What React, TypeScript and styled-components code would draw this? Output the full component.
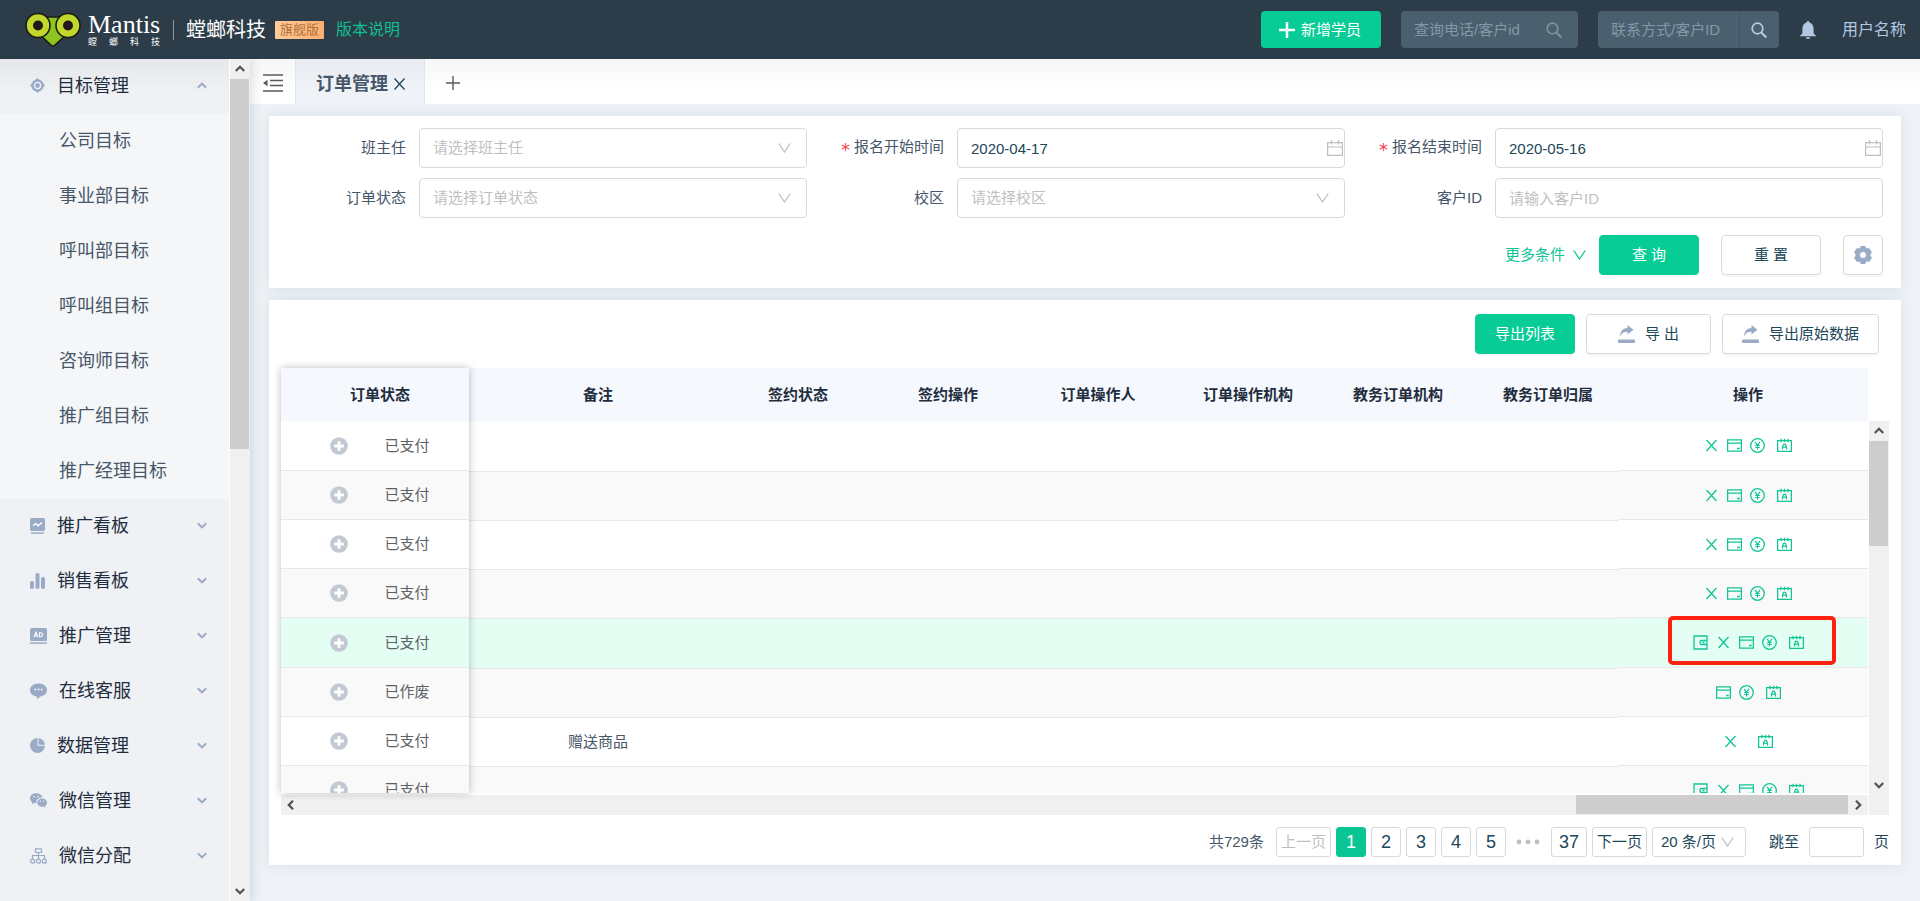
import React from "react";
import styled, { createGlobalStyle, css } from "styled-components";

const color = {
  header: "#2c3d49",
  headerField: "#4a606e",
  green: "#07cc96",
  greenInk: "#11c596",
  page: "#eff3f7",
  line: "#d9d9d9",
  rowLine: "#e8e8e8",
  ink: "#1f2d3d",
  teal: "#20465a",
  label: "#475669",
  hint: "#bfbfbf",
  icon: "#9aabc6",
};

const GlobalStyle = createGlobalStyle`
  * { box-sizing: border-box; }
  body {
    margin: 0;
    background: ${color.page};
    color: ${color.teal};
    font-family: "Liberation Sans", "Noto Sans CJK SC", sans-serif;
    font-size: 15px;
    line-height: 22px;
  }
  button, input, select { font: inherit; color: inherit; margin: 0; outline: none; }
  button { cursor: pointer; }
  a { text-decoration: none; color: inherit; }
  svg { display: block; flex: none; }
  ul { list-style: none; margin: 0; padding: 0; }
`;

/* ---------- page frame ---------- */

const Page = styled.div`
  display: flex;
  flex-direction: column;
  min-height: 100vh;
`;

const Body = styled.div`
  display: flex;
  flex: 1;
`;

const Main = styled.main`
  flex: 1;
  min-width: 0;
`;

/* ---------- top bar ---------- */

const TopBar = styled.header`
  display: flex;
  align-items: center;
  height: 59px;
  padding: 0 14px 0 25px;
  background: ${color.header};
`;

const Brand = styled.a`
  display: flex;
  align-items: center;
  gap: 7px;
  color: #fff;
`;

const BrandText = styled.span`
  display: flex;
  flex-direction: column;
  width: 72px;
`;

const BrandName = styled.span`
  font-family: "Liberation Serif", serif;
  font-size: 26px;
  line-height: 24px;
`;

const BrandSub = styled.span`
  display: flex;
  justify-content: space-between;
  font-size: 9px;
  line-height: 10px;
`;

const Company = styled.h1`
  margin: 0 9px 0 13px;
  padding-left: 12px;
  border-left: 1px solid #8d979e;
  color: #fff;
  font-size: 20px;
  font-weight: 400;
  line-height: 20px;
`;

const Edition = styled.span`
  margin-right: 12px;
  padding: 0 5px;
  border-radius: 1px;
  background: linear-gradient(90deg, #ffca9a, #fdb070);
  color: #b0703a;
  font-size: 13px;
  line-height: 18px;
  white-space: nowrap;
`;

const VersionLink = styled.a`
  color: #10be90;
  font-size: 16px;
`;

const TopTools = styled.div`
  display: flex;
  align-items: center;
  margin-left: auto;
  height: 37px;
`;

const AddButton = styled.button`
  display: flex;
  align-items: center;
  gap: 6px;
  width: 120px;
  height: 37px;
  padding: 0 18px;
  border: 0;
  border-radius: 4px;
  background: ${color.green};
  color: #fff;
  white-space: nowrap;
`;

const SearchBox = styled.label<{ $split?: boolean }>`
  display: flex;
  align-items: center;
  width: ${(p) => (p.$split ? 181 : 177)}px;
  height: 37px;
  margin-left: 20px;
  border-radius: 4px;
  background: ${color.headerField};
`;

const SearchInput = styled.input`
  flex: 1;
  min-width: 0;
  height: 37px;
  padding: 0 0 0 13px;
  border: 0;
  background: transparent;
  color: #fff;
  &::placeholder { color: #8498a9; opacity: 1; }
`;

const SearchAction = styled.button<{ $split?: boolean }>`
  display: flex;
  align-items: center;
  justify-content: center;
  width: ${(p) => (p.$split ? 40 : 48)}px;
  height: 37px;
  padding: 0;
  border: 0;
  border-left: ${(p) => (p.$split ? "1px solid #405562" : "0")};
  background: transparent;
  color: ${(p) => (p.$split ? "#b9cbe2" : "#7f929f")};
`;

const BellButton = styled.button`
  margin: 0 26px 0 21px;
  padding: 0;
  border: 0;
  background: transparent;
  color: #b3c6e2;
`;

const UserName = styled.a`
  color: #b3c6e2;
  font-size: 16px;
`;

/* ---------- side menu ---------- */

const Side = styled.aside`
  position: relative;
  display: flex;
  flex: none;
  width: 250px;
  background: #eff1f5;
  box-shadow: 2px 0 10px rgba(30, 50, 80, 0.16);
`;

const Menu = styled.nav`
  flex: 1;
  border-right: 1px solid #fff;
`;

const MenuGroup = styled.button<{ $open?: boolean }>`
  display: flex;
  align-items: center;
  gap: 12px;
  width: 100%;
  height: 55px;
  padding: 0 22px 2px 30px;
  border: 0;
  background: ${(p) => (p.$open ? "linear-gradient(#e6e7eb, #eff1f5 60%)" : "transparent")};
  color: ${color.ink};
  font-size: 18px;
  text-align: left;
  svg:last-child { margin-left: auto; }
`;

const SubMenu = styled.ul`
  background: #f5f6f8;
`;

const SubLink = styled.a`
  display: block;
  padding-left: 59px;
  color: ${color.label};
  font-size: 18px;
  line-height: 55px;
`;

/* ---------- scroll bars ---------- */

const VBar = styled.div`
  display: flex;
  flex-direction: column;
  flex: none;
  width: 20px;
  background: #f0f0f0;
  color: #505050;
`;

const HBar = styled.div`
  display: flex;
  height: 20px;
  margin-top: 2px;
  background: #f0f0f0;
  color: #505050;
`;

const BarEnd = styled.span`
  display: flex;
  align-items: center;
  justify-content: center;
  width: 20px;
  height: 20px;
`;

const Thumb = styled.div<{ $w: number; $h: number }>`
  width: ${(p) => p.$w}px;
  height: ${(p) => p.$h}px;
  background: #cdcdcd;
`;

const Spring = styled.div`
  flex: 1;
`;

/* ---------- tabs ---------- */

const Tabs = styled.div`
  display: flex;
  height: 45px;
  background: linear-gradient(#f6f6f6, #fff 70%);
`;

const TabTool = styled.button<{ $w: number }>`
  display: flex;
  align-items: center;
  justify-content: center;
  width: ${(p) => p.$w}px;
  padding: 2px 0 0;
  border: 0;
  background: transparent;
  color: #595959;
`;

const Tab = styled.div`
  display: flex;
  align-items: center;
  gap: 6px;
  width: 130px;
  padding-left: 20px;
  padding-top: 4px;
  border: solid #e1e5ea;
  border-width: 0 1px;
  background: linear-gradient(#e8ecf0, ${color.page} 70%);
  color: ${color.label};
  font-size: 18px;
  font-weight: 700;
  white-space: nowrap;
`;

const TabClose = styled.button`
  padding: 0;
  border: 0;
  background: transparent;
  color: ${color.teal};
`;

/* ---------- panels ---------- */

const Panels = styled.div`
  display: flex;
  flex-direction: column;
  gap: 12px;
  padding: 12px 19px 36px;
`;

const Panel = styled.section`
  background: #fff;
  box-shadow: 0 0 14px rgba(50, 80, 130, 0.12);
`;

const FilterPanel = styled(Panel)`
  padding: 12px 18px 13px 0;
`;

const Fields = styled.div`
  display: grid;
  grid-template-columns: repeat(3, 1fr);
  row-gap: 10px;
`;

const Field = styled.div`
  display: flex;
  align-items: center;
  height: 40px;
`;

const FieldLabel = styled.label`
  display: flex;
  justify-content: flex-end;
  flex: none;
  width: 150px;
  padding-right: 13px;
  color: ${color.label};
  white-space: nowrap;
`;

const Star = styled.span`
  padding: 3px 4px 0 0;
  color: #fa3e4b;
  font-family: "DejaVu Sans", sans-serif;
  font-size: 18px;
  line-height: 22px;
`;

const Control = styled.div`
  position: relative;
  flex: 1;
`;

const control = css`
  width: 100%;
  height: 40px;
  padding: 0 13px;
  border: 1px solid ${color.line};
  border-radius: 4px;
  background: #fff;
`;

const TextBox = styled.input`
  ${control}
  &::placeholder { color: ${color.hint}; opacity: 1; }
`;

const Select = styled.select`
  ${control}
  appearance: none;
  color: ${color.hint};
`;

const ControlIcon = styled.span<{ $right: number }>`
  position: absolute;
  top: 50%;
  right: ${(p) => p.$right}px;
  transform: translateY(-50%);
  color: ${color.hint};
  pointer-events: none;
`;

const Actions = styled.div`
  display: flex;
  justify-content: flex-end;
  gap: 22px;
  margin-top: 17px;
`;

const MoreLink = styled.a`
  display: flex;
  align-items: center;
  gap: 8px;
  margin-right: -9px;
  color: ${color.greenInk};
`;

const Button = styled.button<{ $primary?: boolean; $w: number }>`
  display: flex;
  align-items: center;
  justify-content: center;
  gap: 10px;
  width: ${(p) => p.$w}px;
  height: 40px;
  padding: 0;
  border: 1px solid ${(p) => (p.$primary ? color.green : color.line)};
  border-radius: 4px;
  background: ${(p) => (p.$primary ? color.green : "#fff")};
  color: ${(p) => (p.$primary ? "#fff" : color.teal)};
  box-shadow: 0 2px 0 rgba(0, 0, 0, 0.03);
  white-space: nowrap;
  svg { color: ${color.icon}; }
`;

const TablePanel = styled(Panel)`
  padding: 14px 12px 8px;
`;

const ExportRow = styled.div`
  display: flex;
  justify-content: flex-end;
  gap: 11px;
  padding-right: 10px;
  margin-bottom: 14px;
`;

const TableArea = styled.div`
  display: flex;
  gap: 1px;
`;

const TableColumn = styled.div`
  flex: 1;
  min-width: 0;
`;

const TableParts = styled.div`
  display: flex;
  height: 425px;
`;

const LeftPart = styled.div`
  position: relative;
  z-index: 1;
  flex: none;
  width: 188px;
  overflow: hidden;
  box-shadow: 0 0 8px rgba(0, 0, 0, 0.26);
`;

const MiddlePart = styled.div`
  flex: 1;
  min-width: 0;
  overflow: hidden;
`;

const RightPart = styled.div`
  flex: none;
  width: 250px;
  overflow: hidden;
`;

const Table = styled.table<{ $head: number; $shift?: number; $over?: number }>`
  width: calc(100% + ${(p) => p.$over || 0}px);
  border-collapse: separate;
  border-spacing: 0;
  table-layout: fixed;
  th, td { text-align: center; padding: 0; white-space: nowrap; }
  th {
    height: ${(p) => p.$head}px;
    background: #f5f8fd;
    color: ${color.ink};
    font-weight: 700;
  }
  th:first-child, td:first-child { padding-left: ${(p) => p.$shift || 0}px; }
  tbody tr:first-child td { height: 50px; }
`;

const Row = styled.tr<{ $state: "plain" | "striped" | "hovered" }>`
  td {
    position: relative;
    height: ${(p) => (p.$state === "hovered" ? 50 : 49)}px;
    border-bottom: 1px solid ${color.rowLine};
    background: ${(p) => ({ plain: "#fff", striped: "#f9f9f9", hovered: "#e4fef4" })[p.$state]};
    color: ${color.label};
  }
`;

const StatusCell = styled.div`
  display: flex;
  align-items: center;
  justify-content: center;
  gap: 36px;
  color: #5d6266;
`;

const PlainButton = styled.button`
  padding: 0;
  border: 0;
  background: transparent;
  color: inherit;
`;

const OpGroup = styled.div<{ $wide?: boolean }>`
  display: flex;
  align-items: center;
  justify-content: center;
  gap: ${(p) => (p.$wide ? 20 : 12)}px;
  color: ${color.greenInk};
`;

const OpIcons = styled.div`
  display: flex;
  align-items: center;
  gap: 8px;
`;

const Marker = styled.div`
  position: absolute;
  top: -2px;
  left: 50px;
  width: 168px;
  height: 49px;
  border: 4px solid #ff2012;
  border-radius: 5px;
  pointer-events: none;
`;

const SideBarCell = styled(VBar)`
  margin-top: 53px;
`;

/* ---------- pagination ---------- */

const Pager = styled.nav`
  display: flex;
  align-items: center;
  justify-content: flex-end;
  gap: 5px;
  margin-top: 12px;
  white-space: nowrap;
`;

const Total = styled.span`
  margin-right: 7px;
  color: ${color.label};
`;

const PageButton = styled.button<{ $w: number; $on?: boolean; $word?: boolean }>`
  width: ${(p) => p.$w}px;
  height: 30px;
  padding: 0;
  border: 1px solid ${(p) => (p.$on ? color.greenInk : color.line)};
  border-radius: 3px;
  background: ${(p) => (p.$on ? "#09c594" : "#fff")};
  color: ${(p) => (p.$on ? "#fff" : color.teal)};
  font-size: ${(p) => (p.$word ? 15 : 18)}px;
  line-height: 26px;
  &:disabled { color: ${color.hint}; }
`;

const Dots = styled.span`
  display: flex;
  justify-content: center;
  width: 35px;
  color: ${color.hint};
`;

const SizeBox = styled.div`
  position: relative;
  width: 94px;
  margin-right: 18px;
`;

const SizeSelect = styled.select`
  width: 100%;
  height: 30px;
  padding: 0 8px;
  border: 1px solid ${color.line};
  border-radius: 3px;
  background: #fff;
  appearance: none;
`;

const Jump = styled.label`
  display: flex;
  align-items: center;
  gap: 10px;
`;

const JumpInput = styled.input`
  width: 55px;
  height: 30px;
  border: 1px solid ${color.line};
  border-radius: 3px;
`;

/* ---------- drawings ---------- */

const Logo = () => (
  <svg width="56" height="35" viewBox="0 0 56 35">
    <path d="M14 5 L42 5 L42 22 L30 33 Q28 35 26 33 L14 22Z" fill="#8fc31f" stroke="#1c1a14" strokeWidth="1.6" />
    <circle cx="13" cy="13.5" r="12" fill="#c0d82c" stroke="#1c1a14" strokeWidth="1.6" />
    <circle cx="43" cy="13.5" r="12" fill="#c0d82c" stroke="#1c1a14" strokeWidth="1.6" />
    <circle cx="13" cy="13.5" r="5" fill="#231815" />
    <circle cx="43" cy="13.5" r="5" fill="#231815" />
  </svg>
);

const SearchIcon = () => (
  <svg width="16" height="16" viewBox="0 0 16 16" fill="none" stroke="currentColor" strokeWidth="1.7">
    <circle cx="6.5" cy="6.5" r="5.3" />
    <path d="M10.3 10.5 15.3 15.5" strokeWidth="2" />
  </svg>
);

const Bell = () => (
  <svg width="16" height="18" viewBox="0 0 16 18" fill="currentColor">
    <path d="M8 0a1.3 1.3 0 0 1 1.3 1.5C12 2.2 13.6 4.5 13.6 7.5V12.5L15.8 14.600V15.300H.2V14.600L2.400 12.500V7.500C2.400 4.500 4 2.200 6.700 1.500A1.300 1.300 0 0 1 8 0ZM5.700 16.200H10.300A2.300 1.800 0 0 1 5.700 16.200Z" />
  </svg>
);

const Plus = ({ size, weight }: { size: number; weight: number }) => (
  <svg width={size} height={size} viewBox="0 0 16 16" stroke="currentColor" strokeWidth={weight}>
    <path d="M8 0V16M0 8H16" />
  </svg>
);

const Chevron = ({ up }: { up?: boolean }) => (
  <svg width="10" height="7" viewBox="0 0 10 7" fill="none" stroke={color.icon} strokeWidth="2">
    <path d={up ? "M.8 5.700 5 1.600 9.200 5.700" : "M.8 1.300 5 5.400 9.200 1.300"} />
  </svg>
);

const Vee = () => (
  <svg width="13" height="10" viewBox="0 0 13 10" fill="none" stroke="currentColor" strokeWidth="1.3">
    <path d="M.8.5 6.500 9 12.200.5" />
  </svg>
);

const BarArrow = ({ turn }: { turn: number }) => (
  <svg width="10" height="10" viewBox="0 0 10 10" fill="none" stroke="currentColor" strokeWidth="2.200">
    <path d="M.8 7 5 2.800 9.200 7" transform={`rotate(${turn} 5 5)`} />
  </svg>
);

const Cross = () => (
  <svg width="11" height="12" viewBox="0 0 11 12" stroke="currentColor" strokeWidth="1.3">
    <path d="M.5.500 10.500 11.500M10.500.500.5 11.500" />
  </svg>
);

const Collapse = () => (
  <svg width="20" height="18" viewBox="0 0 20 18" stroke="currentColor" strokeWidth="1.600">
    <path d="M0 1H20M7 6.500H20M7 11.500H20M0 17H20" />
    <path d="M0 9 4.500 5.800V12.200Z" fill="currentColor" stroke="none" />
  </svg>
);

const CalendarIcon = () => (
  <svg width="16" height="16" viewBox="0 0 16 16" fill="none" stroke="currentColor" strokeWidth="1.200">
    <path d="M.6 2.600H15.400V15.400H.6ZM.6 7H15.400M4.500 0V4.500M11.500 0V4.500" />
  </svg>
);

const Gear = () => (
  <svg width="18" height="18" viewBox="0 0 18 18">
    <path
      fill="currentColor"
      fillRule="evenodd"
      d="M7 0H11L12.100 2.700 15 2.300 17.600 6 16 9 17.600 12 15 15.700 12.100 15.300 11 18H7L5.900 15.300 3 15.700.4 12 2 9 .4 6 3 2.300 5.900 2.700ZM9 5.800A3.200 3.200 0 1 0 9 12.200 3.200 3.200 0 1 0 9 5.800Z"
      stroke="currentColor"
      strokeWidth=".5"
      strokeLinejoin="round"
    />
  </svg>
);

const ExportIcon = () => (
  <svg width="17" height="18" viewBox="0 0 17 18" fill="currentColor">
    <path d="M9.500 0 15.500 4.800 9.500 9.600V6.700C6 6.700 3.800 8 2 11.400 2.200 6.500 4.500 3.200 9.500 2.900Z" />
    <rect y="14.500" width="17" height="3.500" rx=".8" />
  </svg>
);

const Expand = () => (
  <svg width="18" height="18" viewBox="0 0 18 18">
    <circle cx="9" cy="9" r="8.800" fill="#c3c9d3" />
    <path d="M9 4.200V13.800M4.200 9H13.800" stroke="#fff" strokeWidth="2.800" />
  </svg>
);

const opSvg = { width: 15, height: 15, viewBox: "0 0 15 15", fill: "none", stroke: "currentColor", strokeWidth: 1.3 };

const opIcons: Record<string, React.ReactNode> = {
  账单: (
    <svg {...opSvg}>
      <path d="M1 1H14V14H1ZM14 5.500H8.500Q7 5.500 7 7.500T8.500 9.500H14M9.500 7.500H11.500" />
    </svg>
  ),
  作废: (
    <svg {...opSvg}>
      <path d="M2.500 2 12.500 13M12.500 2 2.500 13" />
    </svg>
  ),
  支付: (
    <svg {...opSvg}>
      <path d="M.6 1.800H14.400V13.200H.6ZM.6 5.200H14.400M10 10.500H12.800" />
    </svg>
  ),
  退款: (
    <svg {...opSvg}>
      <circle cx="7.500" cy="7.500" r="6.800" />
      <path d="M5 3.800 7.500 7.200 10 3.800M7.500 7.200V11.400M5.200 7.500H9.800M5.200 9.500H9.800" strokeWidth="1.100" />
    </svg>
  ),
  排课: (
    <svg {...opSvg}>
      <path d="M.6 2.600H14.400V13.400H.6ZM4 .8V4.200M7.500.8V4.200M11 .8V4.200" />
      <path d="M5.500 11.500V9L6.500 6.400H8.500L9.500 9V11.500M5.500 9.200H9.500" strokeWidth="1.200" />
    </svg>
  ),
};

const menuIcons: Record<string, React.ReactNode> = {
  target: (
    <svg width="15" height="15" viewBox="0 0 15 15" fill={color.icon}>
      <circle cx="7.500" cy="7.500" r="6.200" />
      <path d="M7.500 0 9.800 2.500H5.200ZM7.500 15 5.200 12.500H9.800ZM0 7.500 2.500 5.200V9.800ZM15 7.500 12.500 9.800V5.200Z" />
      <circle cx="7.500" cy="7.500" r="3.100" fill="none" stroke="#eef0f5" strokeWidth="1.300" />
    </svg>
  ),
  board: (
    <svg width="15" height="16" viewBox="0 0 15 16" fill={color.icon}>
      <rect width="15" height="13" rx="1.800" />
      <path d="M3 7.800 5.800 5.400 8 7.800 12 4.600" fill="none" stroke="#fff" strokeWidth="1.400" />
      <rect x="1" y="14.300" width="13" height="1.500" />
    </svg>
  ),
  bars: (
    <svg width="15" height="16" viewBox="0 0 15 16" fill={color.icon}>
      <rect y="8" width="4" height="8" rx="1.800" />
      <rect x="5.500" width="4" height="16" rx="1.800" />
      <rect x="11" y="4" width="4" height="12" rx="1.800" />
    </svg>
  ),
  ad: (
    <svg width="17" height="16" viewBox="0 0 17 16" fill={color.icon}>
      <rect width="17" height="13" rx="1.500" />
      <path d="M4 9.200 6 4.200 8 9.200M4.700 7.800H7.300M9.600 4.700V8.700H10.800Q12.700 8.500 12.700 6.700T10.800 4.700Z" fill="none" stroke="#fff" strokeWidth="1.100" />
      <rect y="14.300" width="17" height="1.500" />
    </svg>
  ),
  chat: (
    <svg width="17" height="16" viewBox="0 0 17 16" fill={color.icon}>
      <path d="M8.500.5C13.300.5 17 3.200 17 7S13.600 13.200 10.500 13.400L7 16V13.500C3 13.200 0 10.600 0 7S3.700.5 8.500.5Z" />
      <path d="M4.500 6.500H6.200M7.700 6.500H9.400M10.900 6.500H12.600" stroke="#fff" strokeWidth="1.600" />
    </svg>
  ),
  pie: (
    <svg width="15" height="15" viewBox="0 0 15 15" fill={color.icon}>
      <circle cx="7.500" cy="7.500" r="7.500" />
      <path d="M8 0V7.300H15" fill="none" stroke="#eff1f5" strokeWidth="1" />
    </svg>
  ),
  wechat: (
    <svg width="17" height="15" viewBox="0 0 17 15" fill={color.icon}>
      <path d="M6.300.3C9.500.3 12 2 12.300 4.600 8.800 4.500 6.200 6.700 6.400 9.700L6.500 10.300 4.200 10.100 1.800 11.600 2.300 9.200C.8 8.200 0 7 0 5.200 0 2.400 2.800.3 6.300.3Z" />
      <path d="M12.200 5.500C15 5.500 17 7.200 17 9.500 17 10.900 16.300 12 15.200 12.800L15.600 14.800 13.500 13.600C9.800 14.100 7.300 12.300 7.300 9.500 7.300 7.200 9.400 5.500 12.200 5.500Z" />
      <path d="M3.500 3.600H5M7.500 3.600H9M9.800 8.200H11M13 8.200H14.200" stroke="#eff1f5" strokeWidth="1.200" />
    </svg>
  ),
  tree: (
    <svg width="17" height="16" viewBox="0 0 17 16" fill="none" stroke={color.icon} strokeWidth="1.200">
      <path d="M5.500.8H11.500V4.500H5.500ZM8.500 4.500V11M2.500 11V7.500H14.500V11" />
      <circle cx="2.600" cy="13.200" r="2" />
      <circle cx="8.500" cy="13.200" r="2" />
      <circle cx="14.400" cy="13.200" r="2" />
    </svg>
  ),
};

/* ---------- data ---------- */

const goals = ["公司目标", "事业部目标", "呼叫部目标", "呼叫组目标", "咨询师目标", "推广组目标", "推广经理目标"];

const groups = [
  ["board", "推广看板"],
  ["bars", "销售看板"],
  ["ad", "推广管理"],
  ["chat", "在线客服"],
  ["pie", "数据管理"],
  ["wechat", "微信管理"],
  ["tree", "微信分配"],
];

const middleHeads = ["备注", "签约状态", "签约操作", "订单操作人", "订单操作机构", "教务订单机构", "教务订单归属"];

type Order = { status: string; note?: string; ops: string[]; hovered?: boolean };

const usual = ["作废", "支付", "退款"];
const orders: Order[] = [
  { status: "已支付", ops: usual },
  { status: "已支付", ops: usual },
  { status: "已支付", ops: usual },
  { status: "已支付", ops: usual },
  { status: "已支付", ops: ["账单", ...usual], hovered: true },
  { status: "已作废", ops: ["支付", "退款"] },
  { status: "已支付", note: "赠送商品", ops: ["作废"] },
  { status: "已支付", ops: ["账单", ...usual] },
];

const rowState = (order: Order, index: number) =>
  order.hovered ? "hovered" : index % 2 ? "striped" : "plain";

/* ---------- parts ---------- */

const Dropdown = ({ id, label, hint }: { id: string; label: string; hint: string }) => (
  <Field>
    <FieldLabel htmlFor={id}>{label}</FieldLabel>
    <Control>
      <Select id={id}>
        <option>{hint}</option>
      </Select>
      <ControlIcon $right={16}>
        <Vee />
      </ControlIcon>
    </Control>
  </Field>
);

const DateField = ({ id, label, value }: { id: string; label: string; value: string }) => (
  <Field>
    <FieldLabel htmlFor={id}>
      <Star>*</Star>
      {label}
    </FieldLabel>
    <Control>
      <TextBox id={id} defaultValue={value} />
      <ControlIcon $right={2}>
        <CalendarIcon />
      </ControlIcon>
    </Control>
  </Field>
);

const Operation = ({ name }: { name: string }) => (
  <PlainButton aria-label={name}>{opIcons[name]}</PlainButton>
);

const SideMenu = () => (
  <Side>
    <Menu>
      <MenuGroup $open>
        {menuIcons.target}
        目标管理
        <Chevron up />
      </MenuGroup>
      <SubMenu>
        {goals.map((goal) => (
          <li key={goal}>
            <SubLink href="#">{goal}</SubLink>
          </li>
        ))}
      </SubMenu>
      {groups.map(([icon, name]) => (
        <MenuGroup key={name}>
          {menuIcons[icon]}
          {name}
          <Chevron />
        </MenuGroup>
      ))}
    </Menu>
    <VBar>
      <BarEnd>
        <BarArrow turn={0} />
      </BarEnd>
      <Thumb $w={19} $h={370} />
      <Spring />
      <BarEnd>
        <BarArrow turn={180} />
      </BarEnd>
    </VBar>
  </Side>
);

const OrderTable = () => (
  <TableArea>
    <TableColumn>
      <TableParts>
        <LeftPart>
          <Table $head={53} $shift={10}>
            <thead>
              <tr>
                <th>订单状态</th>
              </tr>
            </thead>
            <tbody>
              {orders.map((order, i) => (
                <Row key={i} $state={rowState(order, i)}>
                  <td>
                    <StatusCell>
                      <PlainButton aria-label="展开">
                        <Expand />
                      </PlainButton>
                      {order.status}
                    </StatusCell>
                  </td>
                </Row>
              ))}
            </tbody>
          </Table>
        </LeftPart>
        <MiddlePart>
          <Table $head={54} $shift={4} $over={5}>
            <colgroup>
              <col />
              {middleHeads.slice(1).map((head) => (
                <col key={head} width="150" />
              ))}
            </colgroup>
            <thead>
              <tr>
                {middleHeads.map((head) => (
                  <th key={head}>{head}</th>
                ))}
              </tr>
            </thead>
            <tbody>
              {orders.map((order, i) => (
                <Row key={i} $state={rowState(order, i)}>
                  {middleHeads.map((head, c) => (
                    <td key={head}>{c === 0 ? order.note : null}</td>
                  ))}
                </Row>
              ))}
            </tbody>
          </Table>
        </MiddlePart>
        <RightPart>
          <Table $head={53} $shift={10}>
            <thead>
              <tr>
                <th>操作</th>
              </tr>
            </thead>
            <tbody>
              {orders.map((order, i) => (
                <Row key={i} $state={rowState(order, i)}>
                  <td>
                    <OpGroup $wide={order.ops.length === 1}>
                      <OpIcons>
                        {order.ops.map((name) => (
                          <Operation key={name} name={name} />
                        ))}
                      </OpIcons>
                      <Operation name="排课" />
                    </OpGroup>
                    {order.hovered && <Marker />}
                  </td>
                </Row>
              ))}
            </tbody>
          </Table>
        </RightPart>
      </TableParts>
      <HBar>
        <BarEnd>
          <BarArrow turn={270} />
        </BarEnd>
        <Spring />
        <Thumb $w={272} $h={19} />
        <BarEnd>
          <BarArrow turn={90} />
        </BarEnd>
      </HBar>
    </TableColumn>
    <SideBarCell>
      <BarEnd>
        <BarArrow turn={0} />
      </BarEnd>
      <Thumb $w={19} $h={105} />
      <Spring />
      <BarEnd>
        <BarArrow turn={180} />
      </BarEnd>
      <BarEnd />
    </SideBarCell>
  </TableArea>
);

const Pagination = () => (
  <Pager aria-label="分页">
    <Total>共729条</Total>
    <PageButton $w={55} $word disabled>
      上一页
    </PageButton>
    {[1, 2, 3, 4, 5].map((n) => (
      <PageButton key={n} $w={30} $on={n === 1}>
        {n}
      </PageButton>
    ))}
    <Dots>
      <svg width="24" height="6" viewBox="0 0 24 6" fill="currentColor">
        <circle cx="3" cy="3" r="2.400" />
        <circle cx="12" cy="3" r="2.400" />
        <circle cx="21" cy="3" r="2.400" />
      </svg>
    </Dots>
    <PageButton $w={36}>37</PageButton>
    <PageButton $w={55} $word>
      下一页
    </PageButton>
    <SizeBox>
      <SizeSelect aria-label="每页条数">
        <option>20 条/页</option>
      </SizeSelect>
      <ControlIcon $right={12}>
        <Vee />
      </ControlIcon>
    </SizeBox>
    <Jump>
      跳至
      <JumpInput />
      页
    </Jump>
  </Pager>
);

export default function App() {
  return (
    <Page>
      <GlobalStyle />
      <TopBar>
        <Brand href="#">
          <Logo />
          <BrandText>
            <BrandName>Mantis</BrandName>
            <BrandSub>
              {["螳", "螂", "科", "技"].map((c) => (
                <span key={c}>{c}</span>
              ))}
            </BrandSub>
          </BrandText>
        </Brand>
        <Company>螳螂科技</Company>
        <Edition>旗舰版</Edition>
        <VersionLink href="#">版本说明</VersionLink>
        <TopTools>
          <AddButton>
            <Plus size={16} weight={2.5} />
            新增学员
          </AddButton>
          <SearchBox>
            <SearchInput aria-label="查询电话/客户id" placeholder="查询电话/客户id" />
            <SearchAction aria-label="查询">
              <SearchIcon />
            </SearchAction>
          </SearchBox>
          <SearchBox $split>
            <SearchInput aria-label="联系方式/客户ID" placeholder="联系方式/客户ID" />
            <SearchAction $split aria-label="搜索">
              <SearchIcon />
            </SearchAction>
          </SearchBox>
          <BellButton aria-label="通知">
            <Bell />
          </BellButton>
          <UserName href="#">用户名称</UserName>
        </TopTools>
      </TopBar>
      <Body>
        <SideMenu />
        <Main>
          <Tabs>
            <TabTool $w={45} aria-label="收起菜单">
              <Collapse />
            </TabTool>
            <Tab>
              订单管理
              <TabClose aria-label="关闭">
                <Cross />
              </TabClose>
            </Tab>
            <TabTool $w={55} aria-label="新建标签">
              <Plus size={14} weight={1.6} />
            </TabTool>
          </Tabs>
          <Panels>
            <FilterPanel>
              <Fields>
                <Dropdown id="teacher" label="班主任" hint="请选择班主任" />
                <DateField id="start" label="报名开始时间" value="2020-04-17" />
                <DateField id="end" label="报名结束时间" value="2020-05-16" />
                <Dropdown id="status" label="订单状态" hint="请选择订单状态" />
                <Dropdown id="campus" label="校区" hint="请选择校区" />
                <Field>
                  <FieldLabel htmlFor="client">客户ID</FieldLabel>
                  <Control>
                    <TextBox id="client" placeholder="请输入客户ID" />
                  </Control>
                </Field>
              </Fields>
              <Actions>
                <MoreLink href="#">
                  更多条件
                  <Vee />
                </MoreLink>
                <Button $primary $w={100}>查 询</Button>
                <Button $w={100}>重 置</Button>
                <Button $w={40} aria-label="设置">
                  <Gear />
                </Button>
              </Actions>
            </FilterPanel>
            <TablePanel>
              <ExportRow>
                <Button $primary $w={100}>导出列表</Button>
                <Button $w={125}>
                  <ExportIcon />导 出
                </Button>
                <Button $w={157}>
                  <ExportIcon />
                  导出原始数据
                </Button>
              </ExportRow>
              <OrderTable />
              <Pagination />
            </TablePanel>
          </Panels>
        </Main>
      </Body>
    </Page>
  );
}
